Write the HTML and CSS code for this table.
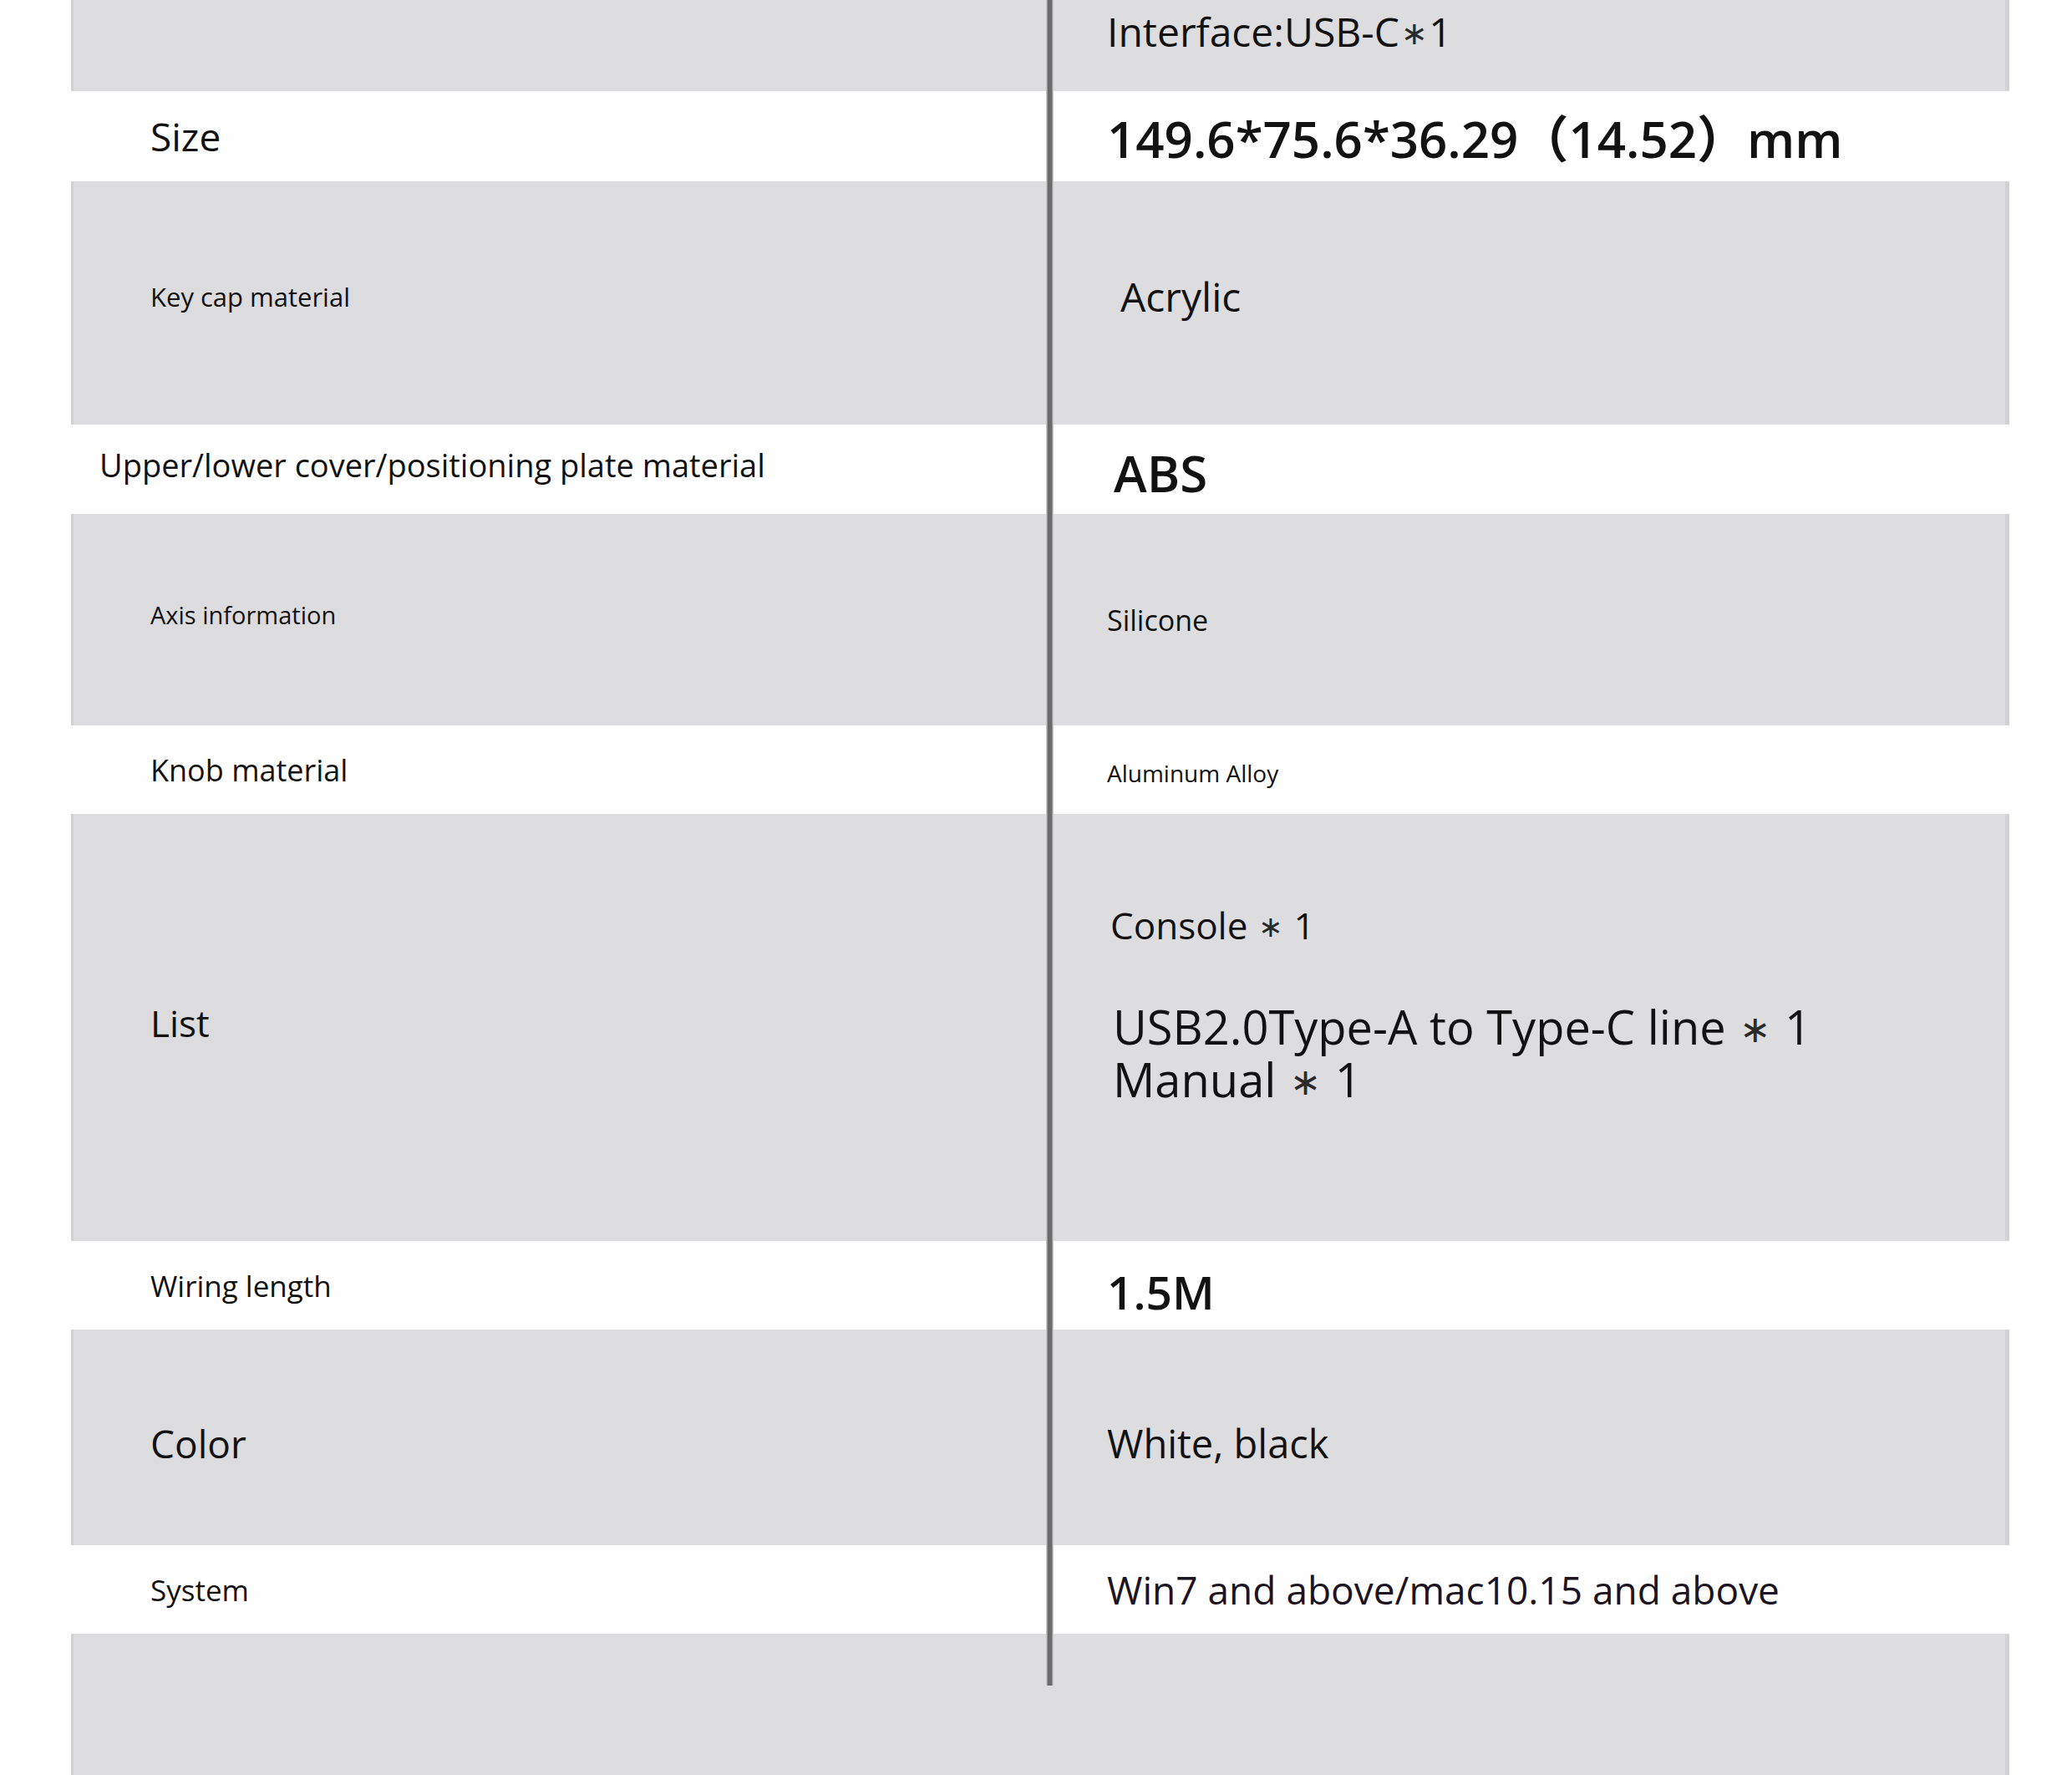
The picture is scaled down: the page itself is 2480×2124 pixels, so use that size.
FILE: index.html
```html
<!DOCTYPE html>
<html lang="en">
<head>
<meta charset="utf-8">
<title>Specifications</title>
<link rel="stylesheet" href="styles.css">
</head>
<body>
<div class="spec">
  <div class="row gray h109">
    <div class="cell key"></div>
    <div class="rule"></div>
    <div class="cell val up14"><span class="t48">Interface:USB-C<span class="ast">∗</span>1</span></div>
  </div>
  <div class="row white h108">
    <div class="cell key"><span class="t46">Size</span></div>
    <div class="rule"></div>
    <div class="cell val"><span class="t60 semi">149.6*75.6*36.29（14.52）mm</span></div>
  </div>
  <div class="row gray h291">
    <div class="cell key up8"><span class="t31">Key cap material</span></div>
    <div class="rule"></div>
    <div class="cell val up8 in80"><span class="t48">Acrylic</span></div>
  </div>
  <div class="row white h107">
    <div class="cell key in34 up6"><span class="t38">Upper/lower cover/positioning plate material</span></div>
    <div class="rule"></div>
    <div class="cell val in72 dn4"><span class="t60 semi">ABS</span></div>
  </div>
  <div class="row gray h253">
    <div class="cell key up6"><span class="t29">Axis information</span></div>
    <div class="rule"></div>
    <div class="cell val"><span class="t34">Silicone</span></div>
  </div>
  <div class="row white h106">
    <div class="cell key"><span class="t36">Knob material</span></div>
    <div class="rule"></div>
    <div class="cell val dn4"><span class="t28">Aluminum Alloy</span></div>
  </div>
  <div class="row gray h511">
    <div class="cell key up12"><span class="t44">List</span></div>
    <div class="rule"></div>
    <div class="cell val list">
      <p class="item t44">Console <span class="ast">∗</span> 1</p>
      <p class="item-line t56">USB2.0Type-A to Type-C line <span class="ast">∗</span> 1</p>
      <p class="item-line t56">Manual <span class="ast">∗</span> 1</p>
    </div>
  </div>
  <div class="row white h106">
    <div class="cell key"><span class="t35">Wiring length</span></div>
    <div class="rule"></div>
    <div class="cell val dn12"><span class="t55 semi">1.5M</span></div>
  </div>
  <div class="row gray h258">
    <div class="cell key dn12"><span class="t46">Color</span></div>
    <div class="rule"></div>
    <div class="cell val dn12"><span class="t47">White, black</span></div>
  </div>
  <div class="row white h106">
    <div class="cell key"><span class="t35">System</span></div>
    <div class="rule"></div>
    <div class="cell val"><span class="t46 plum">Win7 and above/mac10.15 and above</span></div>
  </div>
  <div class="row gray h169">
    <div class="cell key"></div>
    <div class="rule short"></div>
    <div class="cell val"></div>
  </div>
</div>
</body>
</html>
```

FILE: styles.css
```css
html, body {
  margin: 0;
  padding: 0;
  background: #ffffff;
}

body {
  font-family: "Open Sans", "Noto Sans", "Noto Sans CJK SC", sans-serif;
  color: #121212;
  overflow: hidden;
}

.spec {
  margin-left: 85px;
  width: 2320px;
  display: flex;
  flex-direction: column;
}

.row {
  display: flex;
}

.h106 { height: 106px; }
.h107 { height: 107px; }
.h108 { height: 108px; }
.h109 { height: 109px; }
.h169 { height: 169px; }
.h253 { height: 253px; }
.h258 { height: 258px; }
.h291 { height: 291px; }
.h511 { height: 511px; }

.cell {
  display: flex;
  align-items: center;
  box-sizing: border-box;
  white-space: nowrap;
}

.key {
  width: 1167px;
  padding-left: 95px;
}

.val {
  width: 1144px;
  padding-left: 64px;
}

.gray .key {
  background: #dcdbde;
  border-left: 3px solid #d1d0d3;
  padding-left: 92px;
}

.gray .key.in34 { padding-left: 31px; }

.gray .val {
  background: #dddcdf;
  border-right: 5px solid #d2d1d4;
}

.white .key,
.white .val {
  background: #fefefe;
}

.in34 { padding-left: 34px; }
.in72 { padding-left: 72px; }
.in80 { padding-left: 80px; }

.up14 { padding-bottom: 35px; }
.up12 { padding-bottom: 12px; }
.up8 { padding-bottom: 16px; }
.up6 { padding-bottom: 12px; }
.dn4 { padding-top: 8px; }
.dn12 { padding-top: 14px; }

.rule {
  width: 9px;
  flex: none;
  background: linear-gradient(to right,
    #c9c9c9 0 1px,
    #9a9a9a 1px 2px,
    #6b6b6b 2px 7px,
    #9a9a9a 7px 8px,
    #c9c9c9 8px 9px);
}

.rule.short {
  background:
    linear-gradient(to right,
      #c9c9c9 0 1px,
      #9a9a9a 1px 2px,
      #6b6b6b 2px 7px,
      #9a9a9a 7px 8px,
      #c9c9c9 8px 9px) top left / 9px 62px no-repeat,
    #dcdbde;
}

.ast {
  font-family: "DejaVu Sans", sans-serif;
  font-size: 0.8em;
  font-weight: 400;
  color: #2a2a2a;
  vertical-align: 0.07em;
  padding: 0 0.04em;
}

.list {
  flex-direction: column;
  align-items: flex-start;
  justify-content: center;
  padding-bottom: 59px;
  padding-left: 68px;
}

.item {
  margin: 0 0 58px 0;
  line-height: 60px;
}

.item-line {
  margin: 0;
  height: 63px;
  line-height: 63px;
  padding-left: 3px;
}

.semi { font-weight: 600; }
.plum { color: #1c1422; }

.t28 { font-size: 28px; }
.t29 { font-size: 29px; }
.t31 { font-size: 31px; }
.t34 { font-size: 34px; }
.t35 { font-size: 35px; }
.t36 { font-size: 36px; }
.t38 { font-size: 38px; }
.t44 { font-size: 44px; }
.t46 { font-size: 46px; }
.t47 { font-size: 47px; }
.t48 { font-size: 48px; }
.t55 { font-size: 55px; }
.t56 { font-size: 56px; }
.t60 { font-size: 60px; }
```
